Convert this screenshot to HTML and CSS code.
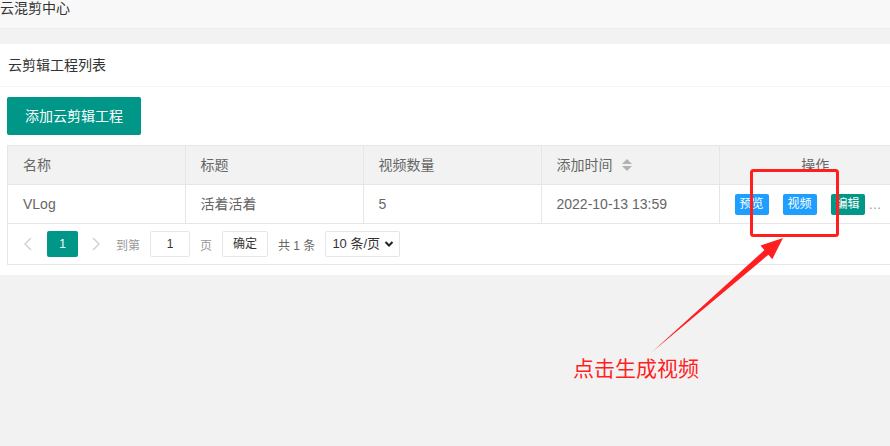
FILE: index.html
```html
<!DOCTYPE html>
<html lang="zh-CN">
<head>
    <meta charset="UTF-8">
    <title>云混剪中心</title>
    <link rel="stylesheet" href="styles.css">
</head>
<body>
    <div class="topbar">云混剪中心</div>
    <div class="main">
        <div class="card">
            <div class="card-header">云剪辑工程列表</div>
            <div class="card-body">
                <a class="btn">添加云剪辑工程</a>
                <div class="table-box">
                    <table class="table">
                        <colgroup>
                            <col style="width:177px">
                            <col style="width:178px">
                            <col style="width:178px">
                            <col style="width:178px">
                            <col style="width:192px">
                        </colgroup>
                        <thead>
                            <tr>
                                <th><div class="cell">名称</div></th>
                                <th><div class="cell">标题</div></th>
                                <th><div class="cell">视频数量</div></th>
                                <th><div class="cell">添加时间<span class="sort"><i class="asc"></i><i class="desc"></i></span></div></th>
                                <th class="center"><div class="cell">操作</div></th>
                            </tr>
                        </thead>
                        <tbody>
                            <tr>
                                <td><div class="cell">VLog</div></td>
                                <td><div class="cell">活着活着</div></td>
                                <td><div class="cell">5</div></td>
                                <td><div class="cell">2022-10-13 13:59</div></td>
                                <td><div class="cell ops"><a class="btn-xs blue">预览</a><a class="btn-xs blue">视频</a><a class="btn-xs last">编辑</a><span class="more">…</span></div></td>
                            </tr>
                        </tbody>
                    </table>
                    <div class="page">
                        <span class="pg-arrow">
                            <svg width="10" height="14" viewBox="0 0 10 14"><path d="M8 1 L2 7 L8 13" fill="none" stroke="#d2d2d2" stroke-width="1.5"/></svg>
                        </span>
                        <span class="pg-cur">1</span>
                        <span class="pg-arrow">
                            <svg width="10" height="14" viewBox="0 0 10 14"><path d="M2 1 L8 7 L2 13" fill="none" stroke="#d2d2d2" stroke-width="1.5"/></svg>
                        </span>
                        <span class="pg-text">到第</span>
                        <span class="pg-input">1</span>
                        <span class="pg-text">页</span>
                        <span class="pg-btn">确定</span>
                        <span class="pg-count">共 1 条</span>
                        <span class="pg-select">10 条/页
                            <svg width="10" height="8" viewBox="0 0 10 8"><path d="M1.5 2 L5 5.5 L8.5 2" fill="none" stroke="#222" stroke-width="2"/></svg>
                        </span>
                    </div>
                </div>
            </div>
        </div>
    </div>

    <svg class="mark" width="890" height="446" viewBox="0 0 890 446">
        <rect x="751.5" y="170.5" width="86" height="65" rx="2" fill="none" stroke="#ff1f1f" stroke-width="3"/>
        <polygon points="652,352 764.4,250.1 760.5,245.6 783,238 772.3,259.2 768.4,254.7" fill="#ff1f1f"/>
    </svg>
    <div class="mark-text">点击生成视频</div>
</body>
</html>
```

FILE: styles.css
```css
body {
    margin: 0;
    width: 890px;
    height: 446px;
    overflow: hidden;
    background-color: #f2f2f2;
    font-family: "Liberation Sans", "Noto Sans CJK SC", sans-serif;
    font-size: 14px;
    color: #333;
    position: relative;
}
.topbar {
    height: 28px;
    line-height: 16px;
    background-color: #f8f8f8;
    border-bottom: 1px solid #ececec;
    color: #333;
}
.main {
    padding-top: 15px;
}
.card {
    background-color: #fff;
    width: 920px;
}
.card-header {
    height: 42px;
    line-height: 42px;
    padding: 0 8px;
    border-bottom: 1px solid #f6f6f6;
}
.card-body {
    padding: 10px 0 10px 7px;
}
.btn {
    display: inline-block;
    height: 38px;
    line-height: 38px;
    padding: 0 18px;
    background-color: #009688;
    color: #fff;
    border-radius: 2px;
    vertical-align: top;
}
.table-box {
    margin-top: 10px;
    border: 1px solid #e6e6e6;
    border-right: none;
}
.table {
    border-collapse: collapse;
    table-layout: fixed;
    width: 903px;
    color: #666;
}
.table th, .table td {
    padding: 0;
    border-left: 1px solid #e6e6e6;
    border-bottom: 1px solid #e6e6e6;
    font-weight: normal;
    text-align: left;
}
.table th:first-child, .table td:first-child {
    border-left: none;
}
.table th {
    background-color: #f2f2f2;
}
.table th.center {
    text-align: center;
}
.cell {
    height: 20px;
    line-height: 20px;
    padding: 9px 15px;
    white-space: nowrap;
    overflow: hidden;
}
.sort {
    display: inline-block;
    width: 10px;
    height: 20px;
    margin-left: 9px;
    vertical-align: top;
    position: relative;
}
.sort i {
    position: absolute;
    left: 0;
    width: 0;
    height: 0;
    border-left: 5px solid transparent;
    border-right: 5px solid transparent;
}
.sort .asc {
    top: 4px;
    border-bottom: 5px solid #b2b2b2;
}
.sort .desc {
    top: 11px;
    border-top: 5px solid #b2b2b2;
}
.ops {
    font-size: 12px;
    color: #666;
}
.btn-xs {
    display: inline-block;
    height: 21px;
    line-height: 21px;
    padding: 0 5px;
    margin-right: 14px;
    border-radius: 2px;
    background-color: #009688;
    color: #fff;
    vertical-align: middle;
}
.btn-xs.blue {
    background-color: #1e9fff;
}
.btn-xs.last {
    margin-right: 4px;
}
.more {
    vertical-align: middle;
    color: #999;
    font-size: 13px;
}
.page {
    height: 26px;
    padding: 7px 0 7px 15px;
    display: flex;
    align-items: center;
    color: #666;
    font-size: 12px;
}
.pg-arrow {
    width: 10px;
    height: 26px;
    display: flex;
    align-items: center;
    margin-right: 14px;
}
.pg-cur {
    width: 31px;
    height: 26px;
    line-height: 26px;
    text-align: center;
    background-color: #009688;
    color: #fff;
    border-radius: 2px;
    margin-right: 13px;
}
.pg-arrow + .pg-text {
    margin-left: 1px;
}
.pg-text {
    color: #999;
    margin-right: 10px;
}
.pg-input {
    width: 38px;
    height: 24px;
    line-height: 24px;
    border: 1px solid #e6e6e6;
    text-align: center;
    border-radius: 2px;
    margin-right: 10px;
    color: #333;
}
.pg-btn {
    width: 44px;
    height: 24px;
    line-height: 24px;
    border: 1px solid #e6e6e6;
    border-radius: 2px;
    text-align: center;
    color: #333;
    margin-right: 10px;
}
.pg-count {
    color: #666;
    margin-right: 10px;
}
.pg-select {
    width: 67px;
    height: 24px;
    line-height: 24px;
    border: 1px solid #e6e6e6;
    border-radius: 2px;
    padding: 0 0 0 6px;
    display: flex;
    align-items: center;
    justify-content: space-between;
    color: #333;
    font-size: 13px;
}
.pg-select svg {
    margin-right: 5px;
}
.mark {
    position: absolute;
    left: 0;
    top: 0;
    pointer-events: none;
}
.mark-text {
    position: absolute;
    left: 573px;
    top: 356px;
    font-size: 21px;
    line-height: 26px;
    color: #ff1f1f;
}
```
